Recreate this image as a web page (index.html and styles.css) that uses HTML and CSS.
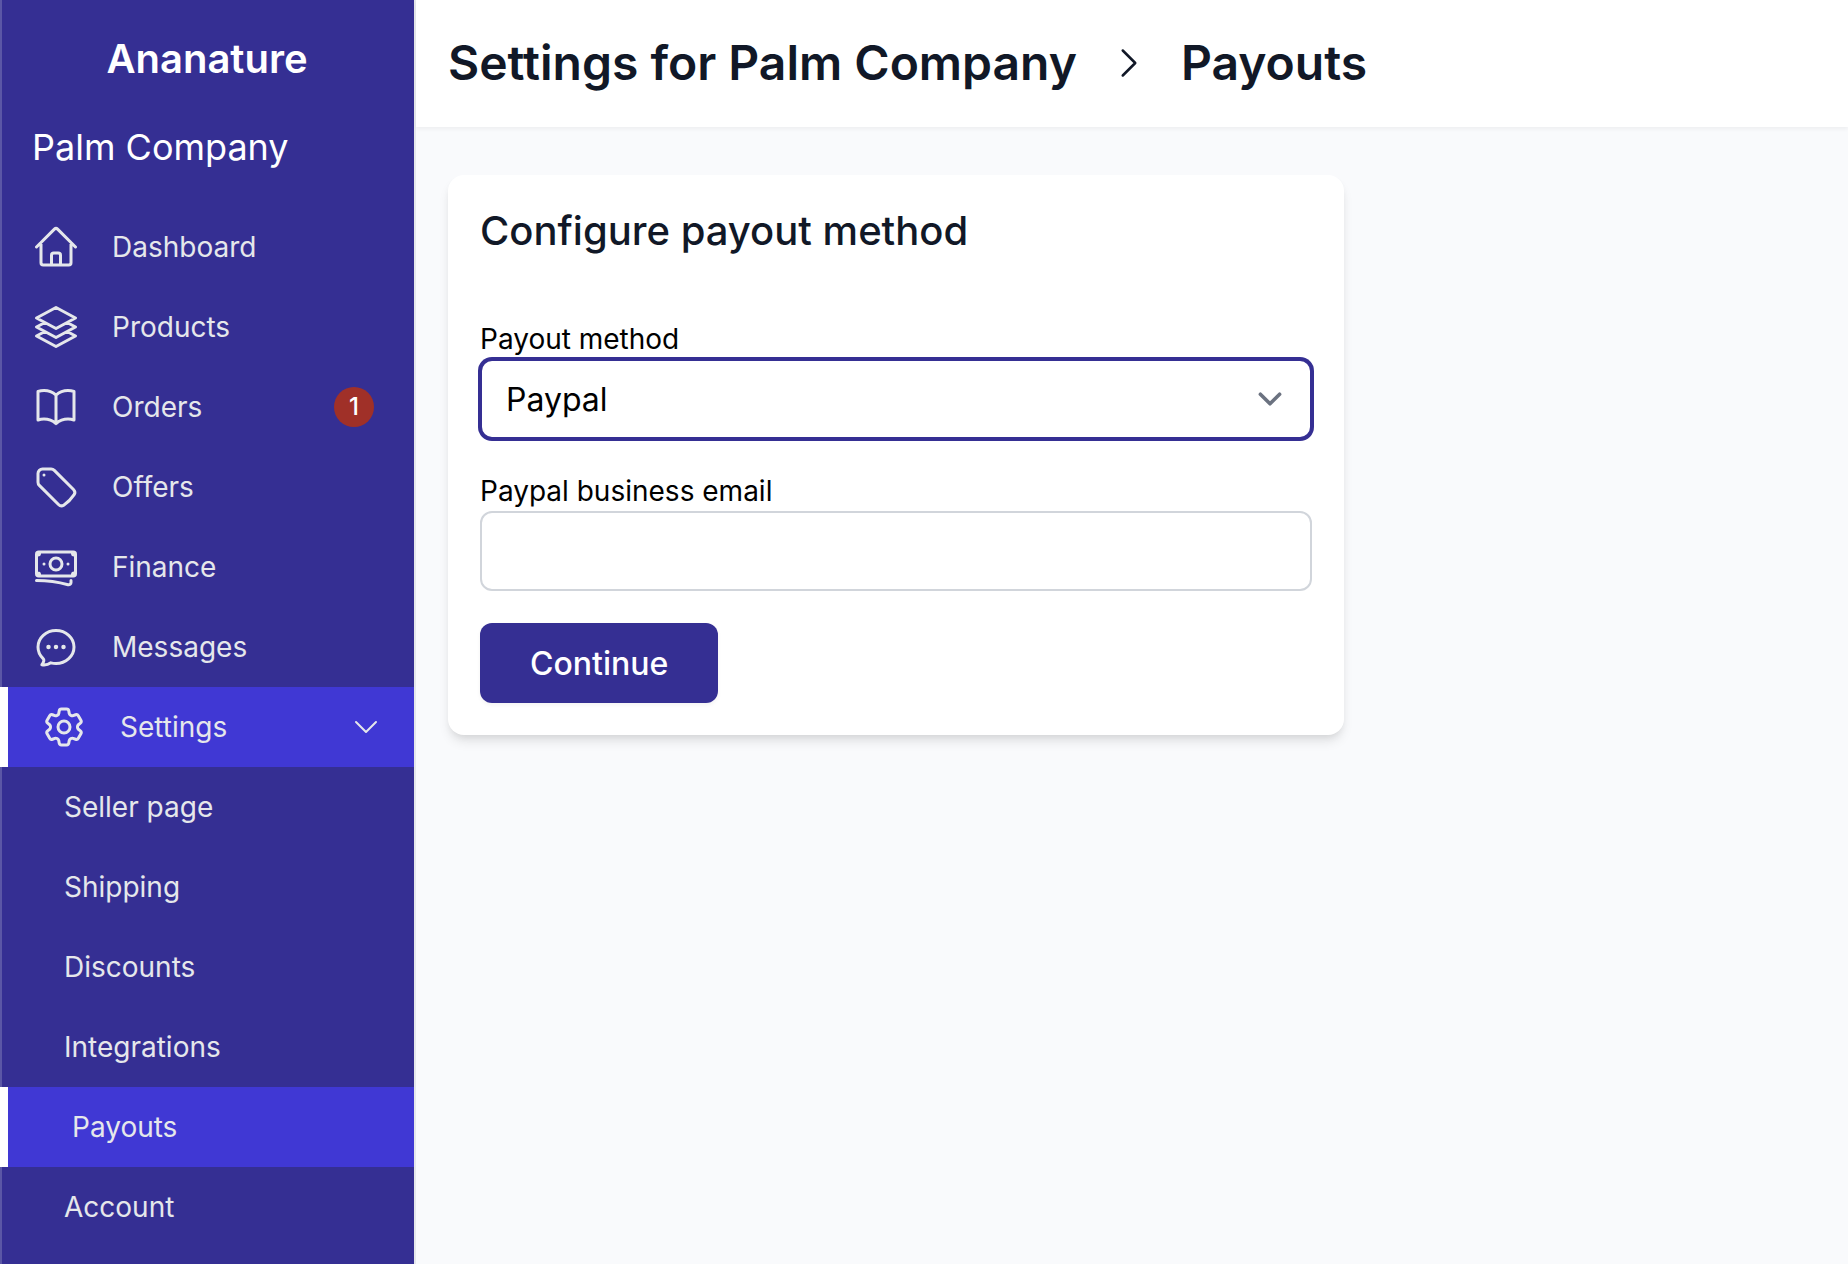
FILE: index.html
```html
<!DOCTYPE html>
<html lang="en">
<head>
  <meta charset="UTF-8" />
  <meta name="viewport" content="width=device-width, initial-scale=1.0"/>
  <title>Payouts - Ananature</title>
  <link rel="stylesheet" href="styles.css">
</head>
<body>
  <div class="layout">
    <aside class="sidebar">
      <a href="#" class="brand">Ananature</a>
      <p class="company">Palm Company</p>

      <nav class="nav">
        <a href="#" class="nav-link">
          <svg class="icon" viewBox="0 0 24 24"><path d="M2.25 12l8.954-8.955c.44-.439 1.152-.439 1.591 0L21.75 12M4.5 9.75v10.125c0 .621.504 1.125 1.125 1.125H9.75v-4.875c0-.621.504-1.125 1.125-1.125h2.25c.621 0 1.125.504 1.125 1.125V21h4.125c.621 0 1.125-.504 1.125-1.125V9.75M8.25 21h8.25"/></svg>
          <span>Dashboard</span>
        </a>
        <a href="#" class="nav-link">
          <svg class="icon" viewBox="0 0 24 24"><path d="M6.429 9.75L2.25 12l4.179 2.25m0-4.5l5.571 3 5.571-3m-11.142 0L2.25 7.5 12 2.25l9.75 5.25-4.179 2.25m0 0L21.75 12l-4.179 2.25m0 0l4.179 2.25L12 21.75 2.25 16.5l4.179-2.25m11.142 0l-5.571 3-5.571-3"/></svg>
          <span>Products</span>
        </a>
        <a href="#" class="nav-link">
          <svg class="icon" viewBox="0 0 24 24"><path d="M12 6.042A8.967 8.967 0 006 3.75c-1.052 0-2.062.18-3 .512v14.25A8.987 8.987 0 016 18c2.305 0 4.408.867 6 2.292m0-14.25a8.966 8.966 0 016-2.292c1.052 0 2.062.18 3 .512v14.25A8.987 8.987 0 0018 18a8.967 8.967 0 00-6 2.292m0-14.25v14.25"/></svg>
          <span>Orders</span>
          <span class="badge">1</span>
        </a>
        <a href="#" class="nav-link">
          <svg class="icon" viewBox="0 0 24 24"><path d="M9.568 3H5.25A2.25 2.25 0 003 5.25v4.318c0 .597.237 1.17.659 1.591l9.581 9.581c.699.699 1.78.872 2.607.33a18.095 18.095 0 005.223-5.223c.542-.827.369-1.908-.33-2.607L11.16 3.66A2.25 2.25 0 009.568 3z"/><path d="M6 6h.008v.008H6V6z"/></svg>
          <span>Offers</span>
        </a>
        <a href="#" class="nav-link">
          <svg class="icon" viewBox="0 0 24 24"><path d="M2.25 18.75a60.07 60.07 0 0115.797 2.101c.727.198 1.453-.342 1.453-1.096V18.75M3.75 4.5v.75A.75.75 0 013 6h-.75m0 0v-.375c0-.621.504-1.125 1.125-1.125H20.25M2.25 6v9m18-10.5v.75c0 .414.336.75.75.75h.75m-1.5-1.5h.375c.621 0 1.125.504 1.125 1.125v9.75c0 .621-.504 1.125-1.125 1.125h-.375m1.5-1.5H21a.75.75 0 00-.75.75v.75m0 0H3.75m0 0h-.375a1.125 1.125 0 01-1.125-1.125V15m1.5 1.5v-.75A.75.75 0 003 15h-.75M15 10.5a3 3 0 11-6 0 3 3 0 016 0zm3 0h.008v.008H18V10.5zm-12 0h.008v.008H6V10.5z"/></svg>
          <span>Finance</span>
        </a>
        <a href="#" class="nav-link">
          <svg class="icon" viewBox="0 0 24 24"><path d="M8.625 12a.375.375 0 11-.75 0 .375.375 0 01.75 0zm0 0H8.25m4.125 0a.375.375 0 11-.75 0 .375.375 0 01.75 0zm0 0H12m4.125 0a.375.375 0 11-.75 0 .375.375 0 01.75 0zm0 0h-.375M21 12c0 4.556-4.03 8.25-9 8.25a9.764 9.764 0 01-2.555-.337A5.972 5.972 0 015.41 20.97a5.969 5.969 0 01-.474-.065 4.48 4.48 0 00.978-2.025c.09-.457-.133-.901-.467-1.226C3.93 16.178 3 14.189 3 12c0-4.556 4.03-8.25 9-8.25s9 3.694 9 8.25z"/></svg>
          <span>Messages</span>
        </a>
        <a href="#" class="nav-link active">
          <svg class="icon" viewBox="0 0 24 24"><path d="M9.594 3.94c.09-.542.56-.94 1.11-.94h2.593c.55 0 1.02.398 1.11.94l.213 1.281c.063.374.313.686.645.87.074.04.147.083.22.127.324.196.72.257 1.075.124l1.217-.456a1.125 1.125 0 011.37.49l1.296 2.247a1.125 1.125 0 01-.26 1.431l-1.003.827c-.293.24-.438.613-.431.992a6.759 6.759 0 010 .255c-.007.378.138.75.43.99l1.005.828c.424.35.534.954.26 1.43l-1.298 2.247a1.125 1.125 0 01-1.369.491l-1.217-.456c-.355-.133-.75-.072-1.076.124a6.57 6.57 0 01-.22.128c-.331.183-.581.495-.644.869l-.213 1.28c-.09.543-.56.941-1.11.941h-2.594c-.55 0-1.02-.398-1.11-.94l-.213-1.281c-.062-.374-.312-.686-.644-.87a6.52 6.52 0 01-.22-.127c-.325-.196-.72-.257-1.076-.124l-1.217.456a1.125 1.125 0 01-1.369-.49l-1.297-2.247a1.125 1.125 0 01.26-1.431l1.004-.827c.292-.24.437-.613.43-.992a6.932 6.932 0 010-.255c.007-.378-.138-.75-.43-.99l-1.004-.828a1.125 1.125 0 01-.26-1.43l1.297-2.247a1.125 1.125 0 011.37-.491l1.216.456c.356.133.751.072 1.076-.124.072-.044.146-.087.22-.128.332-.183.582-.495.644-.869l.214-1.281z"/><path d="M15 12a3 3 0 11-6 0 3 3 0 016 0z"/></svg>
          <span>Settings</span>
          <svg class="icon icon-toggle" viewBox="0 0 24 24"><path d="M19.5 8.25l-7.5 7.5-7.5-7.5"/></svg>
        </a>
        <a href="#" class="nav-link sub">Seller page</a>
        <a href="#" class="nav-link sub">Shipping</a>
        <a href="#" class="nav-link sub">Discounts</a>
        <a href="#" class="nav-link sub">Integrations</a>
        <a href="#" class="nav-link sub active">Payouts</a>
        <a href="#" class="nav-link sub">Account</a>
      </nav>
    </aside>

    <div class="page">
      <header class="page-header">
        <h1>Settings for Palm Company</h1>
        <svg class="icon icon-crumb" viewBox="0 0 24 24"><path d="M8.25 4.5l7.5 7.5-7.5 7.5"/></svg>
        <h1>Payouts</h1>
      </header>

      <main class="content">
        <form class="card">
          <h2>Configure payout method</h2>

          <div class="field">
            <label for="payoutMethod">Payout method</label>
            <div class="select-wrap">
              <select id="payoutMethod" class="control focused">
                <option>Paypal</option>
              </select>
              <svg class="select-arrow" viewBox="0 0 20 20"><path d="M6 8l4 4 4-4"/></svg>
            </div>
          </div>

          <div class="field">
            <label for="paypalEmail">Paypal business email</label>
            <input type="email" id="paypalEmail" class="control">
          </div>

          <button type="button" class="btn">Continue</button>
        </form>
      </main>
    </div>
  </div>
</body>
</html>
```

FILE: styles.css
```css
* {
  box-sizing: border-box;
}
body {
  margin: 0;
  font-family: Inter, "Liberation Sans", sans-serif;
  font-size: 28px;
  line-height: 40px;
  color: #000;
  background: #f9fafc;
}
h1, h2, p {
  margin: 0;
}
.layout {
  display: flex;
  min-height: 100vh;
}

/* Sidebar */
.sidebar {
  flex: none;
  width: 416px;
  padding-top: 39px;
  background: #352f93;
  border-right: 2px solid #e5e7eb;
  box-shadow: inset 2px 0 0 #5b57a6;
}
.brand {
  display: block;
  text-align: center;
  font-size: 40px;
  font-weight: 600;
  color: #fff;
  text-decoration: none;
}
.company {
  padding: 44px 32px 36px;
  font-size: 36px;
  line-height: 48px;
  color: #fff;
}
.nav {
  display: flex;
  flex-direction: column;
}
.nav-link {
  display: flex;
  align-items: center;
  gap: 32px;
  height: 80px;
  padding: 0 32px;
  color: #e5e7eb;
  text-decoration: none;
}
.nav-link:hover,
.nav-link.active {
  background: #4038d4;
}
.nav-link.active {
  border-left: 8px solid #fff;
}
.nav-link.sub {
  padding-left: 64px;
}
.icon {
  flex: none;
  width: 48px;
  height: 48px;
  fill: none;
  stroke: currentColor;
  stroke-width: 1.5;
  stroke-linecap: round;
  stroke-linejoin: round;
}
.icon-toggle {
  width: 32px;
  height: 32px;
  margin-left: auto;
}
.badge {
  width: 40px;
  height: 40px;
  margin-left: auto;
  margin-right: 8px;
  border-radius: 50%;
  background: #a03028;
  color: #fff;
  font-size: 24px;
  font-weight: 500;
  text-align: center;
}

/* Page */
.page {
  flex: 1;
  min-width: 0;
}
.page-header {
  display: flex;
  align-items: center;
  gap: 32px;
  padding: 31px 32px 32px;
  background: #fff;
  color: #111827;
  box-shadow: 0 2px 4px rgba(0, 0, 0, 0.05);
}
.page-header h1 {
  font-size: 48px;
  line-height: 64px;
  font-weight: 600;
}
.icon-crumb {
  width: 40px;
  height: 40px;
}
.content {
  padding: 48px 32px;
}
.card {
  max-width: 896px;
  padding: 32px;
  background: #fff;
  border-radius: 16px;
  box-shadow: 0 8px 12px -2px rgba(0, 0, 0, 0.1), 0 4px 8px -4px rgba(0, 0, 0, 0.1);
}
.card h2 {
  margin-bottom: 64px;
  font-size: 40px;
  line-height: 48px;
  font-weight: 500;
  color: #111827;
}

/* Form */
.field {
  margin-bottom: 32px;
}
.field label {
  display: block;
}
.select-wrap {
  position: relative;
}
.control {
  display: block;
  width: 100%;
  height: 80px;
  padding: 0 24px;
  border: 2px solid #d1d5db;
  border-radius: 12px;
  background: #fff;
  color: #000;
  font-family: inherit;
  font-size: 32px;
  appearance: none;
}
.control:focus,
.control.focused {
  outline: none;
  border-color: #352f93;
  box-shadow: 0 0 0 2px #352f93;
}
.select-arrow {
  position: absolute;
  top: 16px;
  right: 18px;
  width: 48px;
  height: 48px;
  fill: none;
  stroke: #6b7280;
  stroke-width: 1.5;
  stroke-linecap: round;
  stroke-linejoin: round;
  pointer-events: none;
}
.btn {
  display: block;
  height: 80px;
  padding: 0 48px;
  border: 2px solid transparent;
  border-radius: 12px;
  background: #352f93 border-box;
  color: #fff;
  font-family: inherit;
  font-size: 32px;
  font-weight: 500;
  box-shadow: 0 2px 4px rgba(0, 0, 0, 0.05);
  cursor: pointer;
}
.btn:hover {
  background-color: #4038d4;
}
```
